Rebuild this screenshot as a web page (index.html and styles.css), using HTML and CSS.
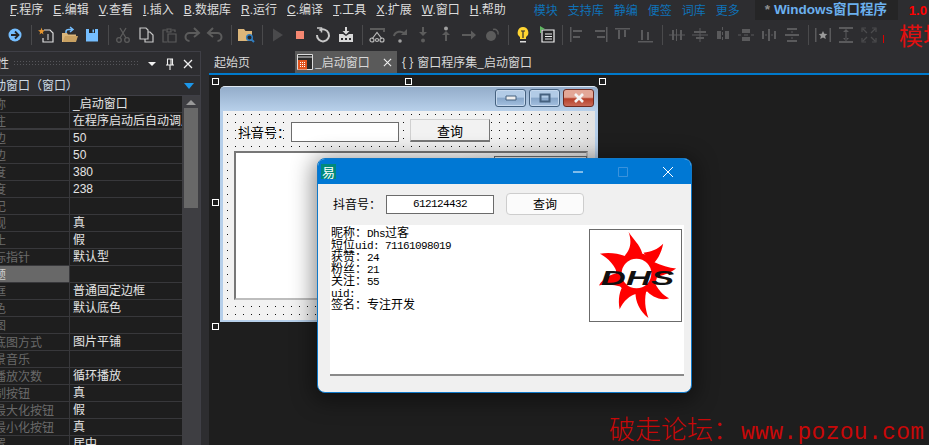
FILE: index.html
```html
<!DOCTYPE html>
<html lang="zh">
<head>
<meta charset="utf-8">
<title>易语言</title>
<link rel="stylesheet" href="styles.css">
</head>
<body>
<div class="app">
  <header class="menubar">
    <span class="m"><u>F</u>.程序</span><span class="m"><u>E</u>.编辑</span><span class="m"><u>V</u>.查看</span><span class="m"><u>I</u>.插入</span><span class="m"><u>B</u>.数据库</span><span class="m"><u>R</u>.运行</span><span class="m"><u>C</u>.编译</span><span class="m"><u>T</u>.工具</span><span class="m"><u>X</u>.扩展</span><span class="m"><u>W</u>.窗口</span><span class="m"><u>H</u>.帮助</span>
    <span class="links"><span>模块</span><span>支持库</span><span>静编</span><span>便签</span><span>词库</span><span>更多</span></span>
    <span class="prog"><i>*</i> Windows窗口程序</span>
    <span class="ver">1.0</span>
  </header>

  <div class="toolbar">
    <span class="tb"><svg viewBox="0 0 18 18"><circle cx="9" cy="9" r="6.5" fill="#75beff"/><path d="M5 9h7M9 5.5 12.5 9 9 12.5" fill="none" stroke="#252526" stroke-width="1.8"/></svg></span>
    <span class="sep"></span>
    <span class="tb"><svg viewBox="0 0 18 18"><path d="M7 4h6l3 3v9H6v-4" fill="none" stroke="#ddd" stroke-width="1.2"/><path d="M11 8v6" stroke="#ddd"/><path d="M4.500 1.500 5.300 4 8 4.500 5.800 6 6.500 8.500 4.500 7 2.500 8.500 3.200 6 1 4.500 3.700 4Z" fill="#e8962e"/></svg></span>
    <span class="tb"><svg viewBox="0 0 18 18"><path d="M2 7h5l1 1.500h8V16H2Z" fill="#dcb67a"/><path d="M3 15 5 10h13l-2 6H3Z" fill="#c9a162"/><path d="M6 7V5.500Q6 3.500 9 3.500h3M10 1l3 2.500L10 6" fill="none" stroke="#75beff" stroke-width="1.500"/></svg></span>
    <span class="tb"><svg viewBox="0 0 18 18"><path d="M3 3h12v12.500H3Z" fill="#75beff"/><path d="M6 3h6v4H6Z" fill="#252526"/><path d="M9.500 3.500h1.500v3H9.500Z" fill="#75beff"/></svg></span>
    <span class="sep"></span>
    <span class="tb"><svg viewBox="0 0 18 18" fill="none" stroke="#5c5c5c" stroke-width="1.300"><circle cx="5" cy="14" r="2.300"/><circle cx="13" cy="14" r="2.300"/><path d="M6 12 12 2M12 12 6 2"/></svg></span>
    <span class="tb"><svg viewBox="0 0 18 18" fill="none" stroke="#c8c8c8" stroke-width="1.200"><path d="M3 2h6l2 2v9H3Z"/><path d="M11 6h2l3 3v7H8v-3"/></svg></span>
    <span class="tb"><svg viewBox="0 0 18 18" fill="none" stroke="#5c5c5c" stroke-width="1.200"><path d="M6 4H3v12h4M12 4h3v2M7 3h4v3H7ZM8 8h8v8H8Z"/></svg></span>
    <span class="tb"><svg viewBox="0 0 18 18" fill="none" stroke="#5c5c5c" stroke-width="2"><path d="M3 7h8.500a4 4 0 0 1 0 8M7 2 2 7l5 4" transform="matrix(-1 0 0 1 18 0)"/></svg></span>
    <span class="tb"><svg viewBox="0 0 18 18" fill="none" stroke="#5c5c5c" stroke-width="2"><path d="M3 7h8.500a4 4 0 0 1 0 8M7 2 2 7l5 4"/></svg></span>
    <span class="sep"></span>
    <span class="tb"><svg viewBox="0 0 18 18"><path d="M1 3h6l1.500 2H15v10H1Z" fill="#dcb67a"/><circle cx="12.500" cy="11.500" r="2.800" fill="#252526" stroke="#2f7dc0" stroke-width="1.500"/><path d="m14.500 13.500 2.500 2.500" stroke="#2f7dc0" stroke-width="2"/></svg></span>
    <span class="sep"></span>
    <span class="tb"><svg viewBox="0 0 18 18"><path d="M5 2.500 15 9 5 15.500Z" fill="#4a4a4c"/></svg></span>
    <span class="tb"><svg viewBox="0 0 18 18"><path d="M5 5h8v8H5Z" fill="#f48771"/></svg></span>
    <span class="tb"><svg viewBox="0 0 18 18" fill="none" stroke="#c8c8c8" stroke-width="2"><path d="M5.500 4.500A6 6 0 1 1 3 9"/><path d="M3 2h4.500v4.500" stroke-width="1.500"/></svg></span>
    <span class="tb"><svg viewBox="0 0 18 18" fill="#d8d8d8"><path d="M8 1h2v4h2.500L9 8.500 5.500 5H8Z"/><path d="M2 8h4l3 2 3-2h4v8H2Z"/><path d="M4 12h2v2H4ZM8 12h2v2H8ZM12 12h2v2h-2Z" fill="#2d2d30"/></svg></span>
    <span class="sep"></span>
    <span class="tb"><svg viewBox="0 0 18 18" fill="none" stroke="#b8b8b8" stroke-width="1.200"><path d="M2 3h14v3" stroke="#5c5c5c" stroke-width="2"/><path d="M4 13 9 6.500 14 13"/><circle cx="4" cy="14" r="2"/><circle cx="14" cy="14" r="2"/><circle cx="9" cy="14" r="1.500"/></svg></span>
    <span class="tb"><svg viewBox="0 0 18 18"><path d="M3 10a6 5 0 0 1 11-2" fill="none" stroke="#5c5c5c" stroke-width="2"/><path d="M16 3v6h-6Z" fill="#5c5c5c"/><circle cx="9" cy="15" r="1.800" fill="#a0a0a0"/></svg></span>
    <span class="tb"><svg viewBox="0 0 18 18" fill="#5c5c5c"><path d="M8 1h2v5h3l-4 4-4-4h3Z"/><circle cx="9" cy="14.500" r="2"/></svg></span>
    <span class="tb"><svg viewBox="0 0 18 18" fill="#5c5c5c"><path d="M9 5l4 4h-3v6H8V9H5Z"/><circle cx="9" cy="2.500" r="2" fill="#a0a0a0"/></svg></span>
    <span class="tb"><svg viewBox="0 0 18 18"><path d="M2 8h9V4.500L16 9l-5 4.500V10H2Z" fill="#5c5c5c"/></svg></span>
    <span class="tb"><svg viewBox="0 0 18 18"><circle cx="8" cy="10" r="5" fill="#5c5c5c"/><path d="M10 3.500a4 4 0 0 1 5 5" fill="none" stroke="#5c5c5c" stroke-width="1.500"/></svg></span>
    <span class="sep"></span>
    <span class="tb"><svg viewBox="0 0 18 18"><path d="M9 1a5.500 5.500 0 0 0-3 10v2h6v-2A5.500 5.500 0 0 0 9 1Z" fill="#ffd531"/><path d="M7 5h4M9 5v7" stroke="#2d2d30" stroke-width="1.200" fill="none"/><path d="M6 15h6v1.500H6Z" fill="#ddd"/></svg></span>
    <span class="tb"><svg viewBox="0 0 18 18"><path d="M5 4h12v12H5Z" fill="#252526" stroke="#eee" stroke-width="1.200"/><path d="M8 8h7M8 10.500h7M8 13h7" stroke="#eee"/><path d="M3 0v7h1V4l4-1Z" fill="#5fb860"/></svg></span>
    <span class="sep"></span>
    <span class="tb"><svg viewBox="0 0 18 18" fill="#5a5a5c"><path d="M2 1h1.500v15H2ZM5 4h9v2H5ZM5 10h7v2H5Z"/></svg></span>
    <span class="tb"><svg viewBox="0 0 18 18" fill="#5a5a5c"><path d="M15 1h1.500v15H15ZM4 4h10v2H4ZM6 10h8v2H6Z"/></svg></span>
    <span class="tb"><svg viewBox="0 0 18 18" fill="#5a5a5c"><path d="M1 2h15v1.500H1ZM4 4h2v9H4ZM10 4h2v7h-2Z"/></svg></span>
    <span class="tb"><svg viewBox="0 0 18 18" fill="#5a5a5c"><path d="M1 15h15v1.500H1ZM4 4h2v10H4ZM10 6h2v8h-2Z"/></svg></span>
    <span class="sep"></span>
    <span class="tb"><svg viewBox="0 0 18 18" fill="#5a5a5c"><path d="M4 4h2v10H4ZM12 4h2v10h-2ZM1 8.500h16v1H1Z"/><path d="M8 3h1v12H8Z"/></svg></span>
    <span class="tb"><svg viewBox="0 0 18 18" fill="#5a5a5c"><path d="M3 5h12v2H3ZM5 11h8v2H5ZM8.500 2h1v14h-1ZM1 8.500h16v1H1Z"/></svg></span>
    <span class="tb"><svg viewBox="0 0 18 18" fill="#5a5a5c"><path d="M3 5h4v8H3ZM11 5h4v8h-4ZM8 1h1v3H8ZM8 6h1v3H8ZM8 11h1v3H8Z"/></svg></span>
    <span class="tb"><svg viewBox="0 0 18 18" fill="#5a5a5c"><path d="M5 3h8v4H5ZM5 11h8v4H5ZM1 8.500h3v1H1ZM7 8.500h4v1H7ZM14 8.500h3v1h-3Z"/></svg></span>
    <span class="tb"><svg viewBox="0 0 18 18" fill="#5a5a5c"><path d="M2 5h2v8H2ZM8 3h2v12H8ZM14 5h2v8h-2ZM5 8.500h2v1H5ZM11 8.500h2v1h-2Z"/></svg></span>
    <span class="tb"><svg viewBox="0 0 18 18" fill="#5a5a5c"><path d="M4 2h10v2H4ZM2 8h14v2H2ZM4 14h10v2H4ZM8.500 5h1v2h-1ZM8.500 11h1v2h-1Z"/></svg></span>
    <span class="sep"></span>
    <span class="tb"><svg viewBox="0 0 18 18"><path d="M1 2h1.500v14H1ZM15.500 2H17v14h-1.500Z" fill="#5a5a5c"/><path d="m9 5 1.300 2.800 3 .3-2.200 2 .7 3L9 11.500 6.200 13l.7-3-2.200-2 3-.3Z" fill="#9a9a9a"/></svg></span>
    <span class="tb"><svg viewBox="0 0 18 18" fill="#5a5a5c"><path d="M2 1h14v2H2ZM2 15h14v2H2ZM8.500 4h1v10h-1ZM6 6l3-3 3 3ZM6 12l3 3 3-3Z"/></svg></span>
    <span class="tb"><svg viewBox="0 0 18 18" fill="none" stroke="#4c4c4e" stroke-width="1.200"><path d="M2 6V2h4M12 2h4v4M16 12v4h-4M6 16H2v-4M3 3l4 4M15 3l-4 4M15 15l-4-4M3 15l4-4"/></svg></span>
    <span class="redmark"></span>
    <span class="bigred">模块</span>
  </div>

  <main class="main">
    <aside class="props">
      <div class="props-head">
        <span class="props-title">属性</span>
        <span class="grip"></span>
        <span class="caret"></span>
        <svg class="pin" viewBox="0 0 10 12"><path d="M2.500 1h5v6h-5ZM1 7h8M5 7v5M6 1v6" fill="none" stroke="#f1f1f1" stroke-width="1.100"/></svg>
        <svg class="cross" viewBox="0 0 10 10"><path d="m1 1 8 8M9 1 1 9" stroke="#f1f1f1" stroke-width="1.300"/></svg>
      </div>
      <div class="props-sel"><span>启动窗口（窗口）</span><i class="bluetri"></i></div>
      <div class="props-body">
        <div class="rows">
          <div class="row"><span class="k">名称</span><span class="v">_启动窗口</span></div>
          <div class="row thick"><span class="k">备注</span><span class="v">在程序启动后自动调用</span></div>
          <div class="row"><span class="k">左边</span><span class="v">50</span></div>
          <div class="row"><span class="k">顶边</span><span class="v">50</span></div>
          <div class="row"><span class="k">宽度</span><span class="v">380</span></div>
          <div class="row"><span class="k">高度</span><span class="v">238</span></div>
          <div class="row"><span class="k">标记</span><span class="v"></span></div>
          <div class="row"><span class="k">可视</span><span class="v">真</span></div>
          <div class="row"><span class="k">禁止</span><span class="v">假</span></div>
          <div class="row"><span class="k">鼠标指针</span><span class="v">默认型</span></div>
          <div class="row sel"><span class="k">标题</span><span class="v"></span></div>
          <div class="row"><span class="k">边框</span><span class="v">普通固定边框</span></div>
          <div class="row"><span class="k">底色</span><span class="v">默认底色</span></div>
          <div class="row"><span class="k">底图</span><span class="v"></span></div>
          <div class="row"><span class="k sub">底图方式</span><span class="v">图片平铺</span></div>
          <div class="row"><span class="k">背景音乐</span><span class="v"></span></div>
          <div class="row"><span class="k sub">播放次数</span><span class="v">循环播放</span></div>
          <div class="row"><span class="k">控制按钮</span><span class="v">真</span></div>
          <div class="row"><span class="k sub">最大化按钮</span><span class="v">假</span></div>
          <div class="row"><span class="k sub">最小化按钮</span><span class="v">真</span></div>
          <div class="row"><span class="k">位置</span><span class="v">居中</span></div>
        </div>
        <div class="scroll"><i class="up"></i><i class="thumb"></i></div>
      </div>
    </aside>

    <section class="editor">
      <nav class="tabs">
        <span class="tab start">起始页</span>
        <span class="tab active">
          <svg viewBox="0 0 16 16"><path d="M.5.5h15v15H.5Z" fill="#2b2b2b" stroke="#ddd"/><path d="M1 3h14" stroke="#ddd"/><path d="M1 6h9v9.500H1Z" fill="#e2531d"/><path d="M3 8.500h5M3 10.500h5M3 12.500h5" stroke="#fff" stroke-dasharray="1 1"/></svg>
          <span class="tab-name">_启动窗口</span>
          <svg class="tab-x" viewBox="0 0 10 10"><path d="m1 1 8 8M9 1 1 9" stroke="#f1f1f1" stroke-width="1.200"/></svg>
        </span>
        <span class="tab code"><b>{ }</b> 窗口程序集_启动窗口</span>
      </nav>
      <div class="canvas">
        <i class="hd h1"></i><i class="hd h2"></i><i class="hd h3"></i><i class="hd h4"></i><i class="hd h5"></i>

        <div class="designwin">
          <div class="dw-title">
            <span class="dw-btn"><svg viewBox="0 0 12 6"><path d="M1 1h10v4H1Z" fill="#eee" stroke="#45617f"/></svg></span>
            <span class="dw-btn"><svg viewBox="0 0 12 10"><path d="M1.500 1.500h9v7h-9Z" fill="none" stroke="#45617f" stroke-width="2"/></svg></span>
            <span class="dw-btn close"><svg viewBox="0 0 12 10"><path d="m2 1 8 8M10 1 2 9" stroke="#f4f4f4" stroke-width="2.600"/></svg></span>
          </div>
          <div class="dw-client">
            <div class="dw-row">
              <span class="dw-label">抖音号：</span>
              <span class="dw-input"></span>
              <span class="dw-query">查询</span>
            </div>
            <div class="dw-box"><span class="dw-inner"></span></div>
          </div>
        </div>

        <div class="dialog">
          <div class="d-title">
            <span class="d-ico">易</span>
            <span class="d-ctl">
              <svg viewBox="0 0 12 12"><path d="M1 6h10" stroke="#fff"/></svg>
              <svg viewBox="0 0 12 12"><path d="M1.500 1.500h9v9h-9Z" fill="none" stroke="#3a92dc"/></svg>
              <svg viewBox="0 0 12 12"><path d="m1 1 10 10M11 1 1 11" stroke="#fff"/></svg>
            </span>
          </div>
          <div class="d-client">
            <div class="d-row">
              <span class="d-label">抖音号：</span>
              <span class="d-input">612124432</span>
              <span class="d-btn">查询</span>
            </div>
            <div class="d-result">
              <div class="d-text">
                <div>昵称：<span class="lat">Dhs</span>过客</div>
                <div>短位<span class="lat">uid: 71161098019</span></div>
                <div>获赞：<span class="lat">24</span></div>
                <div>粉丝：<span class="lat">21</span></div>
                <div>关注：<span class="lat">55</span></div>
                <div><span class="lat">uid:</span></div>
                <div>签名：专注开发</div>
              </div>
              <div class="d-pic">
                <svg viewBox="0 0 92 92">
                  <g fill="#f00">
                    <circle cx="47" cy="44" r="21"/>
                    <path d="M34 27C42 20 42 10 39 2C44 10 50 14 53 24Z"/>
                    <path d="M54 23C62 22 68 20 74 14C72 24 68 30 64 34Z"/>
                    <path d="M64 32C72 36 80 38 87 39C80 44 74 46 66 48Z"/>
                    <path d="M64 50C68 60 74 66 80 69C72 72 62 68 56 60Z"/>
                    <path d="M58 58C54 70 56 80 59 89C50 82 46 72 46 64Z"/>
                    <path d="M48 64C40 66 34 72 30 80C28 70 30 60 34 56Z"/>
                    <path d="M34 58C26 56 16 54 9 56C14 48 22 44 28 44Z"/>
                    <path d="M28 46C26 36 18 28 10 24C20 22 32 24 38 28Z"/>
                  </g>
                  <circle cx="47" cy="44" r="15" fill="#fff"/>
                  <text class="dhs" x="11" y="56" textLength="74" lengthAdjust="spacingAndGlyphs">DHS</text>
                </svg>
              </div>
            </div>
          </div>
        </div>

        <div class="watermark"><span class="wm-cn">破走论坛：</span><span class="wm-en">www.pozou.com</span></div>
      </div>
    </section>
  </main>
</div>
</body>
</html>
```

FILE: styles.css
```css
* { box-sizing: border-box; }
html, body { margin: 0; height: 100%; overflow: hidden; background: #1e1e1e; }
body { font: 12px/1.2 "Noto Sans CJK SC", "Liberation Sans", sans-serif; color: #e0e0e0; }
svg { display: block; }
.app { width: 929px; height: 445px; display: flex; flex-direction: column; overflow: hidden; }

/* menu bar */
.menubar { height: 21px; flex: none; background: #2d2d30; display: flex; align-items: center; padding-left: 10px; white-space: nowrap; color: #dcdcdc; }
.m { margin-right: 10px; font-family: "Liberation Sans", "Noto Sans CJK SC", sans-serif; }
.m u { text-underline-offset: 1px; }
.links { display: flex; gap: 10px; margin-left: 18px; color: #0f72b8; }
.prog { margin-left: 15px; width: 143px; height: 20px; background: #252526; color: #6bb0ee; font-weight: 700; font-size: 13.5px; line-height: 20px; padding-left: 10px; align-self: flex-start; font-family: "Liberation Sans", "Noto Sans CJK SC", sans-serif; }
.prog i { color: #8f8f8f; font-style: normal; }
.ver { margin-left: 11px; color: #f00; font-weight: 700; font-size: 13px; font-family: "Liberation Sans", sans-serif; }

/* toolbar */
.toolbar { height: 30px; flex: none; background: #2d2d30; display: flex; align-items: center; padding: 0 0 2px 3px; white-space: nowrap; }
.tb { width: 23px; height: 22px; flex: none; display: flex; align-items: center; justify-content: center; }
.tb svg { width: 18px; height: 18px; }
.sep { width: 1px; height: 20px; margin: 0 2px 0 5px; background: #4a4a4c; flex: none; }
.redmark { width: 1px; height: 8px; margin: 8px 0 0 3px; background: #d00; flex: none; }
.bigred { margin-left: 15px; color: #e01010; font-size: 24px; line-height: 30px; }

/* main */
.main { flex: 1; min-height: 0; display: flex; }

/* property panel */
.props { width: 209px; flex: none; background: #2d2d30; display: flex; flex-direction: column; overflow: hidden; }
.props-head { width: 201px; height: 25px; flex: none; border: 1px solid #3f3f46; border-width: 1px 1px 1px 0; display: flex; align-items: center; }
.props-title { margin-left: -15px; width: 24px; flex: none; color: #d8d8d8; }
.grip { width: 124px; height: 6px; margin-left: 5px; flex: none; background: conic-gradient(from 270deg at 1px 1px, #55555a 90deg, transparent 0) 0 0 / 3px 3px; }
.caret { margin-left: 10px; flex: none; width: 8px; height: 4px; border: 4px solid transparent; border-top-color: #f1f1f1; border-bottom: 0; }
.pin { width: 10px; height: 12px; margin-left: 9px; flex: none; }
.cross { width: 10px; height: 10px; margin-left: 8px; flex: none; }
.props-sel { width: 201px; height: 19px; flex: none; display: flex; align-items: center; justify-content: space-between; border-right: 1px solid #3f3f46; padding-right: 6px; overflow: hidden; }
.props-sel span { margin-left: -18px; color: #cfdbe6; white-space: nowrap; }
.bluetri { width: 0; height: 0; border: 5px solid transparent; border-top: 6px solid #1c97ea; border-bottom: 0; }
.props-body { width: 201px; flex: 1; min-height: 0; display: flex; border-top: 1px solid #3f3f46; border-right: 1px solid #3f3f46; }
.rows { width: 182px; flex: none; }
.row { height: 17px; display: flex; background: #1e1e1e; border-bottom: 1px solid #38383b; line-height: 16px; overflow: hidden; }
.row.thick { border-bottom: 2px solid #3a3a3d; }
.k { width: 70px; flex: none; color: #6a6a6a; border-right: 1px solid #38383b; white-space: nowrap; overflow: hidden; text-indent: -18px; }
.k.sub { text-indent: -6px; }
.v { flex: 1; padding-left: 3px; color: #e4e4e4; white-space: nowrap; overflow: hidden; font-family: "Liberation Sans", "Noto Sans CJK SC", sans-serif; }
.row.sel .k { background: #686868; color: #cfcfcf; }
.scroll { flex: 1; background: #3e3e42; padding: 0 2px; display: flex; flex-direction: column; align-items: stretch; }
.up { width: 0; height: 0; margin: 4px auto 3px; border: 5px solid transparent; border-top: 0; border-bottom: 5px solid #999; }
.thumb { height: 100px; background: #686868; }

/* editor */
.editor { flex: 1; min-width: 0; display: flex; flex-direction: column; background: #1e1e1e; }
.tabs { height: 24px; flex: none; background: #2d2d30; border-bottom: 2px solid #007acc; display: flex; color: #d8d8d8; white-space: nowrap; }
.tab { display: flex; align-items: center; height: 22px; }
.start { margin-left: 5px; width: 81px; }
.active { width: 102px; background: #5a5a5a; padding-left: 2px; }
.active > svg:first-child { width: 16px; height: 16px; }
.tab-name { margin-left: 2px; }
.tab-x { width: 9px; height: 9px; margin-left: 13px; }
.code { margin-left: 5px; }
.code b { font-weight: 400; margin-right: 4px; font-family: "Liberation Sans", sans-serif; }

/* free canvas */
.canvas { position: relative; flex: 1; min-height: 0; overflow: hidden; }
.hd { position: absolute; width: 7px; height: 7px; border: 1px solid #fff; background: #1e1e1e; }
.h1 { left: 3px; top: 3px; }
.h2 { left: 196px; top: 3px; }
.h3 { left: 390px; top: 3px; }
.h4 { left: 3px; top: 124px; }
.h5 { left: 3px; top: 248px; }

/* designer window */
.designwin { position: absolute; left: 11px; top: 11px; width: 378px; height: 236px; display: flex; flex-direction: column; border-radius: 5px 5px 0 0; overflow: hidden; color: #000; background: #b6cfea; border-top: 1px solid #dfe8f2; }
.dw-title { height: 24px; flex: none; background: linear-gradient(#93acca, #b8d0ea); display: flex; justify-content: flex-end; align-items: center; gap: 3px; padding: 0 4px 3px 0; }
.dw-btn { width: 31px; height: 18px; border: 1px solid #45617f; border-radius: 3px; background: linear-gradient(#b2cbe6 45%, #86a5c8 50%, #a4c0e0); display: flex; align-items: center; justify-content: center; box-shadow: inset 0 0 0 1px #c5d8ee; }
.dw-btn svg { width: 12px; height: 10px; }
.dw-btn.close { background: linear-gradient(#e3a797 45%, #b6402a 55%, #c96b58); border-color: #6e2a20; box-shadow: none; }
.dw-client { flex: 1; margin: 0 3px 2px; padding: 8px 0 0 11px; background: conic-gradient(from 270deg at 1px 1px, #111 90deg, transparent 0) 4px 3px / 8px 8px, linear-gradient(100deg, #f2f2f2 70%, #dcdcdc); }
.dw-row { display: flex; height: 23px; }
.dw-label { width: 57px; padding: 3px 0 0 4px; font-size: 13px; line-height: 20px; }
.dw-input { width: 108px; height: 20px; margin-top: 3px; background: #fff; border: 1px solid #6d6d6d; }
.dw-query { width: 80px; height: 23px; margin-left: 11px; background: #f2f2f2; border: 1px solid #d0d0d0; border-right-color: #777; border-bottom: 2px solid #777; text-align: center; line-height: 21px; font-size: 13px; }
.dw-box { width: 354px; height: 149px; margin-top: 9px; background: linear-gradient(100deg, #fff 60%, #e0e0e0); border: 2px solid #bdbdbd; border-left-color: #777; border-top-color: #777; padding: 3px 0 0 258px; }
.dw-inner { display: block; width: 93px; height: 60px; border: 1px solid #6d6d6d; }

/* dialog */
.dialog { position: absolute; left: 108px; top: 83px; width: 375px; height: 235px; background: #f0f0f0; border: 1px solid #0f78c8; border-radius: 8px; overflow: hidden; box-shadow: 0 4px 22px 4px rgba(0,0,0,.45); display: flex; flex-direction: column; color: #000; z-index: 1; }
.d-title { height: 25px; flex: none; background: #0078d4; display: flex; align-items: center; justify-content: space-between; padding: 0 0 0 3px; }
.d-ico { width: 15px; height: 15px; background: #00897b; color: #fff; font-size: 13px; line-height: 15px; text-align: center; }
.d-ctl { display: flex; gap: 33px; margin-right: 17px; }
.d-ctl svg { width: 12px; height: 12px; }
.d-client { flex: 1; min-height: 0; display: flex; flex-direction: column; padding: 9px 7px 0 12px; }
.d-row { display: flex; align-items: center; height: 22px; flex: none; padding-left: 3px; }
.d-label { width: 53px; }
.d-input { width: 108px; height: 19px; background: #fff; border: 1px solid #6b6b6b; text-align: center; font: 11px/17px "Liberation Mono", monospace; letter-spacing: -.6px; }
.d-btn { width: 78px; height: 22px; margin-left: 12px; background: #fbfbfb; border: 1px solid #cdcdcd; border-radius: 4px; text-align: center; line-height: 20px; }
.d-result { height: 151px; flex: none; margin-top: 10px; background: #fff; border-bottom: 2px solid #8a8a8a; display: flex; justify-content: space-between; padding: 1px 2px 0 1px; }
.d-text { line-height: 12px; white-space: nowrap; }
.d-text div { height: 12px; }
.lat { font: 11px/12px "Liberation Mono", monospace; letter-spacing: -.6px; }
.d-pic { width: 93px; height: 93px; margin-top: 3px; border: 1px solid #6b6b6b; background: #fff; }
.d-pic svg { width: 91px; height: 91px; }
.dhs { font: italic 700 20px "Liberation Sans", sans-serif; fill: #111; }

/* watermark */
.watermark { position: absolute; left: 400px; top: 337px; color: #c80808; white-space: nowrap; display: flex; align-items: baseline; z-index: 2; }
.wm-cn { font-size: 26px; line-height: 32px; font-weight: 300; }
.wm-en { font: 23px/32px "Liberation Mono", monospace; letter-spacing: .3px; margin-left: 2px; }
```
